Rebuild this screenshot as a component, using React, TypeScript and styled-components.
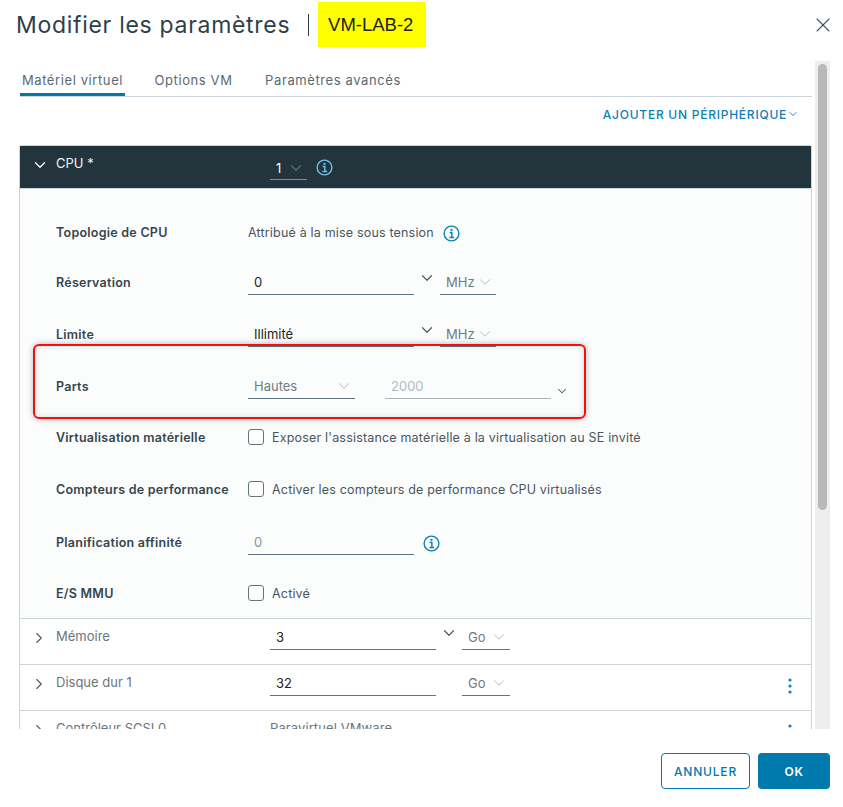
import styled, { createGlobalStyle } from "styled-components";
import { ChevronDown, ChevronRight, X } from "lucide-react";

const GlobalStyle = createGlobalStyle`
  html, body {
    margin: 0;
    padding: 0;
    background: #fff;
    font-family: Inter, "Noto Sans", sans-serif;
    font-size: 13px;
    color: #444;
  }
`;

const InfoIcon = ({ size = 17, color = "#0f7eb5" }: { size?: number; color?: string }) => (
  <svg width={size} height={size} viewBox="0 0 18 18" fill="none">
    <circle cx="9" cy="9" r="7.8" stroke={color} strokeWidth="1.5" />
    <circle cx="9" cy="5.2" r="1.2" fill={color} />
    <path d="M7 8h2.4v5M6.8 13.2h5" stroke={color} strokeWidth="1.5" />
  </svg>
);

const DotsIcon = () => (
  <svg width="4" height="16" viewBox="0 0 4 16" fill="#0f7eb5">
    <circle cx="2" cy="2" r="1.6" />
    <circle cx="2" cy="8" r="1.6" />
    <circle cx="2" cy="14" r="1.6" />
  </svg>
);

const Select = ({ value, width }: { value: string; width: number }) => (
  <SelectBox $width={width}>
    {value}
    <ChevronDown size={18} strokeWidth={1} color="#9aa5ab" />
  </SelectBox>
);

const App = () => {
  return (
    <Page>
      <GlobalStyle />
      <Header>
        <Title>Modifier les paramètres</Title>
        <Divider />
        <VmName>VM-LAB-2</VmName>
        <CloseButton>
          <X size={24} strokeWidth={1.1} />
        </CloseButton>
      </Header>

      <Body>
        <ScrollArea>
          <Tabs>
            <Tab $active $width={105}>Matériel virtuel</Tab>
            <Tab $width={79}>Options VM</Tab>
            <Tab $width={142}>Paramètres avancés</Tab>
          </Tabs>

          <AddRow>
            <AddLink>
              AJOUTER UN PÉRIPHÉRIQUE
              <ChevronDown size={12} strokeWidth={1.8} />
            </AddLink>
          </AddRow>

          <Card>
            <CpuHeader>
              <CpuChevron>
                <ChevronDown size={18} strokeWidth={1.6} color="#fff" />
              </CpuChevron>
              <CpuTitle>CPU *</CpuTitle>
              <CpuSelect>
                1
                <ChevronDown size={18} strokeWidth={1} color="#a9b6bd" />
              </CpuSelect>
              <InfoIcon size={17} color="#6bc1e8" />
            </CpuHeader>

            <CpuBody>
              <Row $gap={0}>
                <Label>Topologie de CPU</Label>
                <PlainText>Attribué à la mise sous tension</PlainText>
                <InfoSlot $left={1}>
                  <InfoIcon />
                </InfoSlot>
              </Row>
              <Row $gap={2}>
                <Label>Réservation</Label>
                <Field $width={166}>0</Field>
                <ComboChevron>
                  <ChevronDown size={18} strokeWidth={1.6} color="#4d5c64" />
                </ComboChevron>
                <Select value="MHz" width={56} />
              </Row>
              <Row $gap={2}>
                <Label>Limite</Label>
                <Field $width={166}>Illimité</Field>
                <ComboChevron>
                  <ChevronDown size={18} strokeWidth={1.6} color="#4d5c64" />
                </ComboChevron>
                <Select value="MHz" width={56} />
              </Row>
              <Row $gap={1}>
                <Highlight />
                <Label>Parts</Label>
                <Select value="Hautes" width={107} />
                <DisabledField>2000</DisabledField>
                <SmallChevron>
                  <ChevronDown size={14} strokeWidth={1.8} color="#4d5c64" />
                </SmallChevron>
              </Row>
              <Row $gap={2}>
                <Label>Virtualisation matérielle</Label>
                <Check />
                <PlainText>Exposer l'assistance matérielle à la virtualisation au SE invité</PlainText>
              </Row>
              <Row $gap={3}>
                <Label>Compteurs de performance</Label>
                <Check />
                <PlainText>Activer les compteurs de performance CPU virtualisés</PlainText>
              </Row>
              <Row $gap={1}>
                <Label>Planification affinité</Label>
                <PlaceholderField>0</PlaceholderField>
                <InfoSlot $left={0}>
                  <InfoIcon />
                </InfoSlot>
              </Row>
              <Row $gap={0}>
                <Label>E/S MMU</Label>
                <Check />
                <PlainText>Activé</PlainText>
              </Row>
            </CpuBody>

            <DeviceRow>
              <DeviceChevron>
                <ChevronRight size={18} strokeWidth={1.5} color="#4d5c64" />
              </DeviceChevron>
              <DeviceName>Mémoire</DeviceName>
              <DeviceValue>
                <Field $width={166}>3</Field>
                <ComboChevron>
                  <ChevronDown size={18} strokeWidth={1.6} color="#4d5c64" />
                </ComboChevron>
                <Select value="Go" width={48} />
              </DeviceValue>
            </DeviceRow>
            <DeviceRow>
              <DeviceChevron>
                <ChevronRight size={18} strokeWidth={1.5} color="#4d5c64" />
              </DeviceChevron>
              <DeviceName>Disque dur 1</DeviceName>
              <DeviceValue>
                <Field $width={166}>32</Field>
                <UnitGap />
                <Select value="Go" width={48} />
              </DeviceValue>
              <DeviceMenu>
                <DotsIcon />
              </DeviceMenu>
            </DeviceRow>
            <DeviceRow>
              <DeviceChevron>
                <ChevronRight size={18} strokeWidth={1.5} color="#4d5c64" />
              </DeviceChevron>
              <DeviceName>Contrôleur SCSI 0</DeviceName>
              <DeviceValue>
                <DeviceText>Paravirtuel VMware</DeviceText>
              </DeviceValue>
              <DeviceMenu>
                <DotsIcon />
              </DeviceMenu>
            </DeviceRow>
          </Card>
        </ScrollArea>

        <ScrollTrack>
          <ScrollThumb />
        </ScrollTrack>
      </Body>

      <Footer>
        <OutlineButton>ANNULER</OutlineButton>
        <PrimaryButton>OK</PrimaryButton>
      </Footer>
    </Page>
  );
};

export default App;

const Page = styled.div`
  display: flex;
  flex-direction: column;
  width: 843px;
  height: 807px;
  overflow: hidden;
`;

const Header = styled.div`
  display: flex;
  align-items: center;
  height: 61px;
  padding: 2px 0 14px 16px;
  box-sizing: border-box;
`;

const Title = styled.h1`
  margin: 0;
  font-size: 23px;
  font-weight: 400;
  letter-spacing: 0.7px;
  color: #2f3f48;
  white-space: nowrap;
`;

const Divider = styled.div`
  width: 1px;
  height: 22px;
  margin: 0 9px 0 18px;
  background: #2f3f48;
`;

const VmName = styled.div`
  display: flex;
  align-items: center;
  justify-content: center;
  width: 108px;
  height: 45px;
  padding-right: 3px;
  box-sizing: border-box;
  background: #ffff00;
  font-family: "Liberation Sans", Arial, sans-serif;
  font-size: 18.5px;
  color: #222;
`;

const CloseButton = styled.div`
  display: flex;
  margin-left: auto;
  margin-right: 8px;
  color: #46555e;
`;

const Body = styled.div`
  display: flex;
  height: 668px;
  padding-right: 13px;
`;

const ScrollArea = styled.div`
  flex: 1;
  min-width: 0;
  overflow: hidden;
  padding: 9px 3px 0 19px;
`;

const ScrollTrack = styled.div`
  width: 15px;
  padding: 3px;
  box-sizing: border-box;
  background: #eeeeee;
`;

const ScrollThumb = styled.div`
  height: 446px;
  border-radius: 5px;
  background: #b9b9b9;
`;

const Tabs = styled.div`
  display: flex;
  gap: 29px;
  height: 27px;
  box-sizing: border-box;
  margin-left: 1px;
  border-bottom: 1px solid #c9d4dc;
`;

const Tab = styled.div<{ $active?: boolean; $width: number }>`
  width: ${({ $width }) => $width}px;
  height: 26px;
  box-sizing: border-box;
  line-height: 21px;
  text-align: center;
  white-space: nowrap;
  font-size: 13px;
  letter-spacing: 0.6px;
  color: #5a6a74;
  border-bottom: ${({ $active }) => ($active ? "3px solid #0079ad" : "none")};
`;

const AddRow = styled.div`
  display: flex;
  justify-content: flex-end;
  height: 48px;
  padding: 9px 13px 0 0;
  box-sizing: border-box;
`;

const AddLink = styled.div`
  display: flex;
  align-items: center;
  height: 16px;
  font-size: 12px;
  font-weight: 500;
  letter-spacing: 0.75px;
  color: #0f7eb5;
`;

const Card = styled.div`
  border: 1px solid #c9d4dc;
  border-bottom: none;
  border-radius: 3px 3px 0 0;
  background: #fff;
`;

const CpuHeader = styled.div`
  display: flex;
  align-items: center;
  height: 42px;
  background: #23343c;
  color: #fff;
`;

const CpuChevron = styled.div`
  display: flex;
  justify-content: center;
  width: 36px;
  margin: -5px 0 0 2px;
`;

const CpuTitle = styled.div`
  width: 212px;
  margin: -8px 0 0 -2px;
  font-size: 13px;
  color: #eef2f4;
`;

const CpuSelect = styled.div`
  display: flex;
  align-items: center;
  justify-content: space-between;
  width: 37px;
  height: 24px;
  margin: 2px 9px 0 2px;
  padding: 0 2px 0 6px;
  box-sizing: border-box;
  border-bottom: 1px solid #7e8f98;
  font-size: 13px;
`;

const CpuBody = styled.div`
  padding-top: 18px;
  background: #fbfdfd;
  height: 430px;
  box-sizing: border-box;
  border-top: 1px solid #c9d4dc;
`;

const Row = styled.div<{ $gap: number }>`
  position: relative;
  display: flex;
  align-items: center;
  height: 50px;
  margin-bottom: ${({ $gap }) => $gap}px;
  padding-left: 36px;
`;

const Highlight = styled.div`
  position: absolute;
  left: 13px;
  top: -17px;
  width: 549px;
  height: 71px;
  border: 2px solid #f01010;
  border-radius: 6px;
  box-shadow: 0 0 6px rgba(0, 0, 0, 0.28), inset 0 0 6px rgba(0, 0, 0, 0.14);
  pointer-events: none;
`;

const Label = styled.div`
  width: 192px;
  flex: none;
  font-size: 12.5px;
  font-weight: 600;
  letter-spacing: 0.25px;
  color: #36454d;
  white-space: nowrap;
`;

const PlainText = styled.div`
  margin-right: 8px;
  font-size: 12.5px;
  letter-spacing: 0.18px;
  color: #48565e;
  white-space: nowrap;
`;

const InfoSlot = styled.div<{ $left: number }>`
  display: flex;
  margin: 2px 0 0 ${({ $left }) => $left}px;
`;

const Field = styled.div<{ $width: number }>`
  width: ${({ $width }) => $width}px;
  height: 25px;
  padding-left: 6px;
  box-sizing: border-box;
  line-height: 24px;
  font-size: 13px;
  color: #222;
  border-bottom: 1px solid #5f7480;
`;

const DisabledField = styled.div`
  width: 166px;
  height: 25px;
  margin-left: 30px;
  padding-left: 6px;
  box-sizing: border-box;
  line-height: 24px;
  font-size: 13px;
  color: #b3b9bd;
  border-bottom: 1px solid #aeb6bb;
`;

const PlaceholderField = styled.div`
  width: 166px;
  height: 25px;
  margin-right: 9px;
  padding-left: 6px;
  box-sizing: border-box;
  line-height: 24px;
  font-size: 13px;
  color: #8a949a;
  border-bottom: 1px solid #5f7480;
`;

const SelectBox = styled.div<{ $width: number }>`
  display: flex;
  align-items: center;
  justify-content: space-between;
  width: ${({ $width }) => $width}px;
  height: 25px;
  padding: 0 2px 0 6px;
  box-sizing: border-box;
  font-size: 13px;
  color: #6f7b82;
  border-bottom: 1px solid #5f7480;
`;

const ComboChevron = styled.div`
  display: flex;
  justify-content: center;
  width: 26px;
  margin-top: -9px;
`;

const SmallChevron = styled.div`
  display: flex;
  justify-content: center;
  width: 22px;
  margin-top: 9px;
`;

const UnitGap = styled.div`
  width: 26px;
`;

const Check = styled.div`
  width: 16px;
  height: 16px;
  flex: none;
  margin-right: 8px;
  box-sizing: border-box;
  border: 1px solid #65757e;
  border-radius: 3px;
  background: #fff;
`;

const DeviceRow = styled.div`
  display: flex;
  align-items: flex-start;
  height: 46px;
  box-sizing: border-box;
  border-top: 1px solid #c9d4dc;
`;

const DeviceChevron = styled.div`
  display: flex;
  justify-content: center;
  width: 36px;
  margin-top: 10px;
  padding-left: 2px;
  box-sizing: border-box;
`;

const DeviceName = styled.div`
  width: 214px;
  margin-top: 9px;
  font-size: 13px;
  color: #6a767d;
  white-space: nowrap;
`;

const DeviceValue = styled.div`
  display: flex;
  align-items: center;
  margin-top: 6px;
`;

const DeviceText = styled.div`
  margin-top: 3px;
  font-size: 13px;
  letter-spacing: 0.1px;
  color: #6a767d;
  white-space: nowrap;
`;

const DeviceMenu = styled.div`
  display: flex;
  margin: 13px 19px 0 auto;
`;

const Footer = styled.div`
  display: flex;
  justify-content: flex-end;
  gap: 8px;
  padding: 24px 13px 0 0;
`;

const OutlineButton = styled.button`
  width: 89px;
  height: 36px;
  padding: 0;
  border: 1px solid #0079ad;
  border-radius: 4px;
  background: #fff;
  font-family: inherit;
  font-size: 12px;
  font-weight: 500;
  letter-spacing: 0.8px;
  color: #0079ad;
`;

const PrimaryButton = styled.button`
  width: 72px;
  height: 36px;
  padding: 0;
  border: none;
  border-radius: 4px;
  background: #0079ad;
  font-family: inherit;
  font-size: 12px;
  font-weight: 600;
  letter-spacing: 0.6px;
  color: #fff;
`;
